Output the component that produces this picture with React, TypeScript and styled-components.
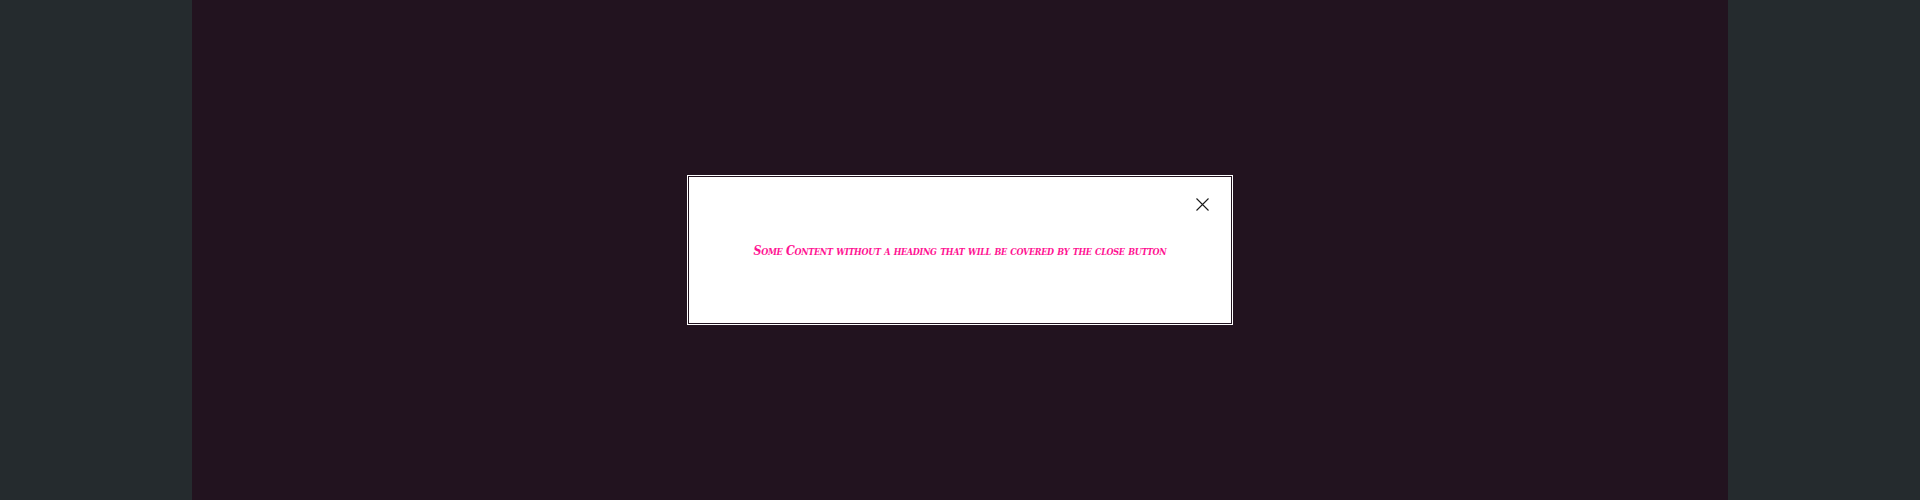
import React from "react";
import styled, { createGlobalStyle } from "styled-components";

const Global = createGlobalStyle`
  html, body { margin: 0; padding: 0; background: #252b2e; }
  #root { height: 500px; }
`;

const Page = styled.div`
  display: grid;
  grid-template-columns: 192px 1fr 192px;
  height: 500px;
  background: #252b2e;
`;

const Panel = styled.main`
  grid-column: 2;
  background: #22131f;
  display: flex;
  align-items: center;
  justify-content: center;
`;

const Dialog = styled.div`
  position: relative;
  box-sizing: border-box;
  width: 546px;
  height: 150px;
  border: 3px double #ffffff;
  background: #ffffff;
  background-clip: padding-box;
  display: flex;
  align-items: center;
  justify-content: center;
`;

const CloseButton = styled.button`
  position: absolute;
  top: 20px;
  right: 21px;
  width: 13px;
  height: 13px;
  padding: 0;
  border: 0;
  background: transparent;
  cursor: pointer;
  display: flex;
  align-items: center;
  justify-content: center;
`;

const Content = styled.p`
  margin: 0;
  font-family: "DejaVu Serif Condensed", "DejaVu Serif", serif;
  font-stretch: condensed;
  font-style: italic;
  font-weight: bold;
  font-variant: small-caps;
  font-size: 12.3px;
  letter-spacing: -0.32px;
  color: #ff1493;
  text-align: center;
`;

export default function App() {
  return (
    <>
      <Global />
      <Page>
        <Panel>
          <Dialog role="dialog">
            <CloseButton aria-label="Close">
              <svg width="13" height="13" viewBox="0 0 13 13">
                <path d="M0.5 0.5 L12.5 12.5 M12.5 0.5 L0.5 12.5" stroke="#1a1a1a" strokeWidth="1.1" fill="none" />
              </svg>
            </CloseButton>
            <Content>Some Content without a heading that will be covered by the close button</Content>
          </Dialog>
        </Panel>
      </Page>
    </>
  );
}
